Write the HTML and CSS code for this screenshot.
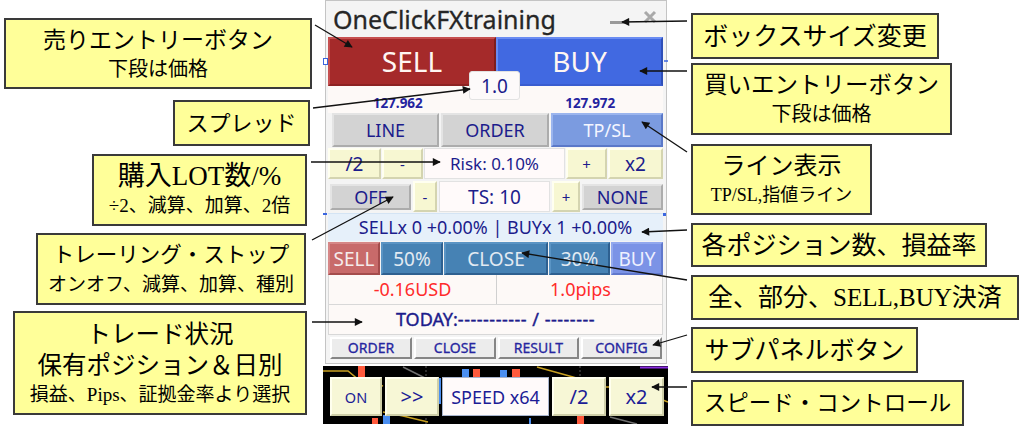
FILE: index.html
```html
<!DOCTYPE html>
<html lang="ja">
<head>
    <meta charset="UTF-8">
    <title>OneClickFXtraining 操作説明</title>
    <link rel="stylesheet" href="styles.css">
</head>
<body>

<div class="canvas">

    <!-- 操作パネルとチャート -->
    <div class="terminal">
        <div class="panel">
            <div class="title-bar">
                <span class="title">OneClickFXtraining</span>
                <span class="win-min"></span>
                <svg class="win-close" width="14" height="14" viewBox="0 0 14 14">
                    <path d="M2,2 L12,12 M12,2 L2,12" stroke="#a9a9a9" stroke-width="3"/>
                </svg>
            </div>

            <div class="entry-row">
                <div class="entry sell">SELL</div>
                <div class="entry buy">BUY</div>
            </div>
            <div class="price-row">
                <span class="price-sell">127.962</span>
                <span class="price-buy">127.972</span>
            </div>
            <div class="lot-box">1.0</div>

            <div class="line-row">
                <div class="btn grey">LINE</div>
                <div class="btn grey">ORDER</div>
                <div class="btn tpsl">TP/SL</div>
            </div>

            <div class="risk-row">
                <div class="btn yellow">/2</div>
                <div class="btn yellow small">-</div>
                <div class="field">Risk: 0.10%</div>
                <div class="btn yellow small">+</div>
                <div class="btn yellow">x2</div>
            </div>

            <div class="ts-row">
                <div class="btn grey">OFF</div>
                <div class="btn yellow small">-</div>
                <div class="field">TS: 10</div>
                <div class="btn yellow small">+</div>
                <div class="btn grey">NONE</div>
            </div>

            <div class="pos-row">SELLx 0 +0.00% | BUYx 1 +0.00%</div>

            <div class="close-row">
                <div class="btn c-sell">SELL</div>
                <div class="btn c-steel">50%</div>
                <div class="btn c-steel">CLOSE</div>
                <div class="btn c-steel">30%</div>
                <div class="btn c-buy">BUY</div>
            </div>

            <div class="pl-row">
                <div class="pl-cell">-0.16USD</div>
                <div class="pl-cell">1.0pips</div>
            </div>
            <div class="today-row">TODAY:<span class="dashes">----------- / --------</span></div>

            <div class="tab-row">
                <div class="tab">ORDER</div>
                <div class="tab">CLOSE</div>
                <div class="tab">RESULT</div>
                <div class="tab">CONFIG</div>
            </div>
        </div>

        <div class="chart">
            <svg class="chart-bg" width="345" height="58" viewBox="0 0 345 58">
                <g stroke="#5a5a5a" stroke-dasharray="2,2">
                    <line x1="103" y1="0" x2="103" y2="58"/>
                    <line x1="257" y1="0" x2="257" y2="58"/>
                </g>
                <polyline points="0,5 25,5 36,14 60,20" fill="none" stroke="#c8a020" stroke-width="1.5"/>
                <polyline points="60,46 80,50 105,56" fill="none" stroke="#c8a020" stroke-width="1.5"/>
                <polyline points="214,1 250,11 282,21 300,21 330,30 345,36" fill="none" stroke="#c8a020" stroke-width="1.5"/>
                <polyline points="80,1 102,12" fill="none" stroke="#707070" stroke-width="1.5"/>
                <polyline points="287,51 314,58" fill="none" stroke="#707070" stroke-width="1.5"/>
                <line x1="317" y1="1.5" x2="345" y2="1.5" stroke="#8a2be2" stroke-width="2"/>
                <g fill="#ff5a3c">
                    <rect x="35" y="0" width="7" height="11"/>
                    <rect x="49" y="52" width="6" height="6"/>
                    <rect x="150" y="3" width="7" height="8"/>
                    <rect x="189" y="3" width="8" height="9"/>
                    <rect x="229" y="11" width="6" height="5"/>
                    <rect x="254" y="48" width="7" height="10"/>
                </g>
                <g fill="#4a8ef0">
                    <rect x="60" y="49" width="7" height="9"/>
                    <rect x="115" y="12" width="3" height="26"/>
                    <rect x="139" y="3" width="7" height="8"/>
                    <rect x="177" y="4" width="7" height="8"/>
                    <rect x="206" y="52" width="2" height="6"/>
                </g>
            </svg>
            <div class="speed-row">
                <div class="btn speed on">ON</div>
                <div class="btn speed">&gt;&gt;</div>
                <div class="speed-box">SPEED x64</div>
                <div class="btn speed">/2</div>
                <div class="btn speed">x2</div>
            </div>
        </div>
    </div>

    <!-- 左側の説明 -->
    <div class="callout c-sell-note">
        <div class="main">売りエントリーボタン</div>
        <div class="sub lg">下段は価格</div>
    </div>
    <div class="callout c-spread">
        <div class="main">スプレッド</div>
    </div>
    <div class="callout c-lot">
        <div class="main">購入LOT数/%</div>
        <div class="sub">÷2、減算、加算、2倍</div>
    </div>
    <div class="callout c-trail">
        <div class="main">トレーリング・ストップ</div>
        <div class="sub">オンオフ、減算、加算、種別</div>
    </div>
    <div class="callout c-status">
        <div class="main">トレード状況</div>
        <div class="main">保有ポジション＆日別</div>
        <div class="sub">損益、Pips、証拠金率より選択</div>
    </div>

    <!-- 右側の説明 -->
    <div class="callout c-box">
        <div class="main">ボックスサイズ変更</div>
    </div>
    <div class="callout c-buy-note">
        <div class="main">買いエントリーボタン</div>
        <div class="sub lg">下段は価格</div>
    </div>
    <div class="callout c-line">
        <div class="main">ライン表示</div>
        <div class="sub sm">TP/SL,指値ライン</div>
    </div>
    <div class="callout c-pos">
        <div class="main">各ポジション数、損益率</div>
    </div>
    <div class="callout c-close">
        <div class="main">全、部分、SELL,BUY決済</div>
    </div>
    <div class="callout c-sub">
        <div class="main">サブパネルボタン</div>
    </div>
    <div class="callout c-speed">
        <div class="main">スピード・コントロール</div>
    </div>

    <!-- 矢印 -->
    <svg class="arrows" width="1024" height="431" viewBox="0 0 1024 431">
        <defs>
            <marker id="ah" viewBox="0 0 10 10" refX="9" refY="5" markerWidth="11" markerHeight="8"
                    markerUnits="userSpaceOnUse" orient="auto">
                <path d="M0,0 L10,5 L0,10 z" fill="#111"/>
            </marker>
        </defs>
        <g stroke="#111" stroke-width="1.3" fill="none" marker-end="url(#ah)">
            <line x1="315" y1="25" x2="352" y2="47"/>
            <line x1="313" y1="108" x2="470" y2="89"/>
            <line x1="311" y1="162" x2="440" y2="162"/>
            <line x1="312" y1="240" x2="393" y2="197"/>
            <line x1="312" y1="322" x2="362" y2="322"/>
            <line x1="687" y1="21" x2="622" y2="22"/>
            <line x1="687" y1="71" x2="640" y2="71"/>
            <line x1="687" y1="152" x2="642" y2="122"/>
            <line x1="687" y1="230" x2="642" y2="232"/>
            <line x1="687" y1="280" x2="522" y2="253"/>
            <line x1="687" y1="335" x2="653" y2="345"/>
            <line x1="687" y1="387" x2="652" y2="387"/>
        </g>
        <rect x="323.5" y="58.5" width="4" height="6" fill="#fff" stroke="#3a66e0"/>
        <line x1="664" y1="61" x2="668" y2="61" stroke="#3a66e0" stroke-width="1.5"/>
        <line x1="323" y1="214" x2="327" y2="214" stroke="#3a66e0" stroke-width="2"/>
        <rect x="663" y="213" width="3" height="3" fill="#3a66e0"/>
    </svg>
</div>

</body>
</html>
```

FILE: styles.css
```css
* {
    box-sizing: border-box;
}
body {
    margin: 0;
    background: #fff;
}
.canvas {
    position: relative;
    width: 1024px;
    height: 431px;
    overflow: hidden;
    background: #fff;
    font-family: "Noto Sans", sans-serif;
}

/* パネル */
.terminal {
    position: absolute;
    left: 323px;
    top: 0;
    width: 345px;
}
.panel {
    position: relative;
    margin-left: 2px;
    width: 342px;
    background: #f4f4f4;
    border: 1px solid #c4c4c4;
    padding: 0 3px 4px 2px;
}
.title-bar {
    height: 36px;
    display: flex;
    align-items: center;
    padding-left: 5px;
}
.title {
    font-size: 25px;
    line-height: 30px;
    color: #262626;
    -webkit-text-stroke: 0.3px #262626;
}
.win-min {
    margin-left: auto;
    margin-top: 6px;
    width: 18px;
    height: 3px;
    background: #999;
}
.win-close {
    margin-left: 15px;
    margin-right: 6px;
    margin-top: -4px;
}

.entry-row {
    display: grid;
    grid-template-columns: 168px 167px;
    height: 49px;
}
.entry {
    display: flex;
    align-items: center;
    justify-content: center;
    font-size: 28px;
    color: #fff6f2;
    border: 2px solid;
    padding-bottom: 2px;
}
.sell {
    background: #a52a2a;
    border-color: #c65050 #7d1d1d #8d2222 #c65050;
}
.buy {
    background: #4169e1;
    border-color: #6a8cf2 #2f4fb8 #3a5dd0 #6a8cf2;
}
.price-row {
    display: grid;
    grid-template-columns: 1fr 1fr;
    height: 27px;
    align-items: end;
    background: #fdf9f7;
    font-size: 13.5px;
    font-weight: bold;
    line-height: 20px;
    color: #2424a0;
    text-align: center;
}
.price-sell {
    padding-right: 28px;
}
.price-buy {
    padding-left: 22px;
}
.lot-box {
    position: absolute;
    left: 143px;
    top: 70px;
    width: 51px;
    height: 29px;
    background: #fdfafa;
    border: 1px solid #e2e2e2;
    border-radius: 3px;
    display: flex;
    align-items: center;
    justify-content: center;
    font-size: 19px;
    color: #1c1c8c;
}

.btn {
    display: flex;
    align-items: center;
    justify-content: center;
    border: 2px solid;
    color: #1c1c8c;
    font-size: 18px;
    line-height: 20px;
}
.grey {
    background: #d3d3d3;
    border-color: #e4e4e4 #acacac #acacac #e4e4e4;
}
.tpsl {
    background: #7b9be0;
    color: #f4f6ff;
    border-color: #9bb5ee #5a78c8 #5a78c8 #9bb5ee;
}
.yellow {
    background: #f7f7d2;
    border-color: #fffff0 #d4d4b0 #d4d4b0 #fffff0;
    font-size: 19px;
}
.yellow.small {
    font-size: 15px;
}
.field {
    display: flex;
    align-items: center;
    justify-content: center;
    background: #fffafa;
    border: 1px solid #e2e2e2;
    color: #1c1c8c;
    font-size: 17px;
}

.line-row {
    display: grid;
    grid-template-columns: 107px 108px 112px;
    column-gap: 2px;
    padding: 0 0 1px 4px;
    height: 35px;
}
.risk-row {
    display: grid;
    grid-template-columns: 53px 41px 141px 41px 55px;
    column-gap: 1px;
    height: 31px;
}
.ts-row {
    display: grid;
    grid-template-columns: 81px 24px 111px 28px 81px;
    column-gap: 2px;
    padding-left: 2px;
    margin-top: 2px;
    height: 31px;
}
.ts-row .grey {
    margin: 3px 0 2px;
}
.ts-row .field {
    font-size: 19px;
}
.pos-row {
    margin-top: 1px;
    height: 28px;
    background: #e6f0fa;
    border-top: 1px solid #d4e4f4;
    text-align: center;
    font-size: 18px;
    line-height: 26px;
    color: #1c1c8c;
}
.close-row {
    display: grid;
    grid-template-columns: 52px 62px 104px 61px 52px;
    column-gap: 1px;
    height: 33px;
    margin-top: 1px;
}
.close-row .btn {
    font-size: 19px;
}
.c-sell {
    background: #c86a6a;
    color: #f5ecec;
    border-color: #d68686 #a44c4c #a44c4c #d68686;
}
.c-steel {
    background: #4682b4;
    color: #e2eaf2;
    border-color: #5a94c4 #2e6090 #2e6090 #5a94c4;
}
.c-buy {
    background: #7b93e6;
    color: #eef0ff;
    border-color: #92a8ee #6078cc #6078cc #92a8ee;
}
.pl-row {
    display: grid;
    grid-template-columns: 167px 168px;
    height: 30px;
    background: #fdf9f7;
    border: 1px solid #d8d8d8;
    border-top: none;
}
.pl-cell {
    text-align: center;
    font-size: 18px;
    line-height: 29px;
    color: #ff2b2b;
}
.pl-cell + .pl-cell {
    border-left: 1px solid #d0d0d0;
}
.today-row {
    height: 30px;
    background: #fdf9f7;
    border: 1px solid #d8d8d8;
    border-top: none;
    text-align: center;
    font-size: 18px;
    line-height: 29px;
    color: #1c1c8c;
    -webkit-text-stroke: 0.4px #1c1c8c;
}
.dashes {
    letter-spacing: 0.5px;
}
.tab-row {
    display: grid;
    grid-template-columns: 82px 82px 81px 81px;
    column-gap: 2px;
    padding-left: 2px;
    margin-top: 2px;
    height: 22px;
}
.tab {
    background: #ececec;
    border: 2px solid;
    border-color: #fff #868686 #868686 #fff;
    text-align: center;
    font-size: 14px;
    line-height: 18px;
    color: #2626a0;
    -webkit-text-stroke: 0.3px #2626a0;
}

/* チャート */
.chart {
    position: relative;
    margin-top: 2px;
    width: 345px;
    height: 58px;
    background: #000;
}
.chart-bg {
    position: absolute;
    left: 0;
    top: 0;
}
.speed-row {
    position: relative;
    display: grid;
    grid-template-columns: 52px 54px 107px 54px 55px;
    column-gap: 3px;
    padding: 11px 0 0 7px;
    height: 50px;
}
.speed {
    background: #f7f7d6;
    border-color: #ffffee #cfcfa8 #cfcfa8 #ffffee;
    font-size: 20px;
    color: #1c1c96;
}
.speed.on {
    font-size: 14.5px;
}
.speed-box {
    display: flex;
    align-items: center;
    justify-content: center;
    background: #fffafa;
    border: 1px solid #a8b4cc;
    font-size: 18px;
    color: #1c1c96;
}

/* 説明の吹き出し */
.callout {
    position: absolute;
    display: flex;
    flex-direction: column;
    align-items: center;
    justify-content: center;
    background: #ffff99;
    border: 2px solid #3a3a3a;
    color: #000;
    font-family: "Liberation Serif", "Noto Sans CJK JP", serif;
    white-space: nowrap;
}
.main {
    font-size: 24px;
    line-height: 31px;
}
.sub {
    font-size: 19px;
    line-height: 27px;
}
.sub.lg {
    font-size: 20px;
}
.sub.sm {
    font-size: 18px;
}
.c-sell-note { left: 4px;   top: 18px;  width: 308px; height: 71px; }
.c-spread    { left: 173px; top: 100px; width: 137px; height: 46px; }
.c-lot       { left: 92px;  top: 154px; width: 215px; height: 72px; }
.c-trail     { left: 36px;  top: 233px; width: 270px; height: 72px; }
.c-status    { left: 13px;  top: 311px; width: 294px; height: 104px; }
.c-box       { left: 691px; top: 13px;  width: 248px; height: 46px; }
.c-buy-note  { left: 691px; top: 63px;  width: 261px; height: 72px; }
.c-line      { left: 691px; top: 144px; width: 181px; height: 71px; }
.c-pos       { left: 691px; top: 223px; width: 296px; height: 44px; }
.c-close     { left: 691px; top: 275px; width: 328px; height: 45px; }
.c-sub       { left: 691px; top: 327px; width: 227px; height: 46px; }
.c-speed     { left: 691px; top: 380px; width: 273px; height: 46px; }

.c-sell-note .main { font-size: 23px; }
.c-spread .main    { font-size: 22px; }
.c-lot .main       { font-size: 27px; }
.c-trail .main     { font-size: 21.5px; }
.c-status .main    { font-size: 24.5px; }
.c-box .main,
.c-pos .main,
.c-close .main,
.c-sub .main       { font-size: 25px; }
.c-buy-note .main  { font-size: 23.5px; }
.c-speed .main     { font-size: 22.5px; }

.arrows {
    position: absolute;
    left: 0;
    top: 0;
    pointer-events: none;
}
```
